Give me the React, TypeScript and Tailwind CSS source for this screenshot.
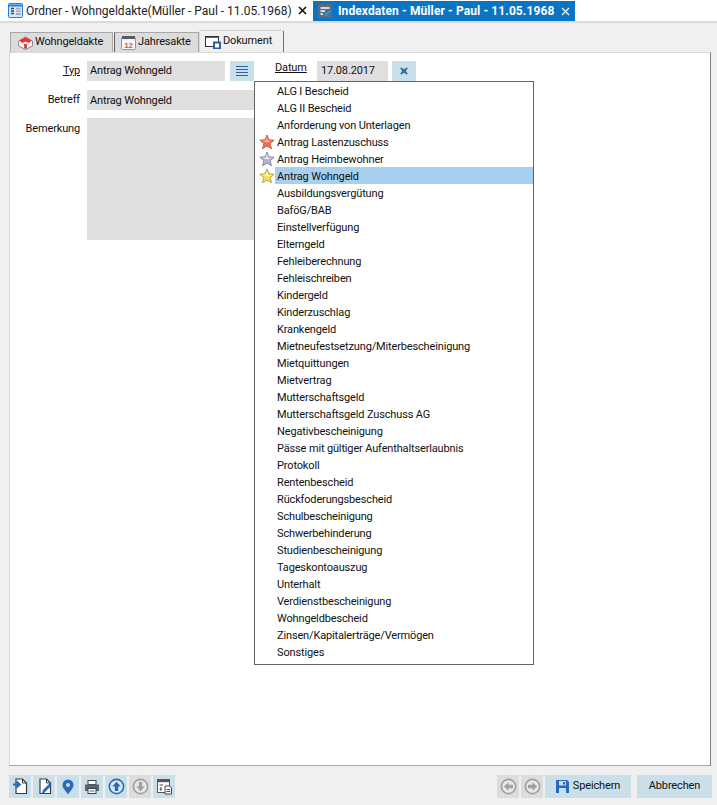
const items = [
  "ALG I Bescheid",
  "ALG II Bescheid",
  "Anforderung von Unterlagen",
  "Antrag Lastenzuschuss",
  "Antrag Heimbewohner",
  "Antrag Wohngeld",
  "Ausbildungsvergütung",
  "BaföG/BAB",
  "Einstellverfügung",
  "Elterngeld",
  "Fehleiberechnung",
  "Fehleischreiben",
  "Kindergeld",
  "Kinderzuschlag",
  "Krankengeld",
  "Mietneufestsetzung/Miterbescheinigung",
  "Mietquittungen",
  "Mietvertrag",
  "Mutterschaftsgeld",
  "Mutterschaftsgeld Zuschuss AG",
  "Negativbescheinigung",
  "Pässe mit gültiger Aufenthaltserlaubnis",
  "Protokoll",
  "Rentenbescheid",
  "Rückfoderungsbescheid",
  "Schulbescheinigung",
  "Schwerbehinderung",
  "Studienbescheinigung",
  "Tageskontoauszug",
  "Unterhalt",
  "Verdienstbescheinigung",
  "Wohngeldbescheid",
  "Zinsen/Kapitalerträge/Vermögen",
  "Sonstiges",
];

const starColors: Record<string, [string, string, string]> = {
  "Antrag Lastenzuschuss": ["#f5674a", "#fbb09a", "#b8705e"],
  "Antrag Heimbewohner": ["#b4b4d2", "#e2e2f0", "#8f8fa6"],
  "Antrag Wohngeld": ["#f8e04e", "#fdf5b0", "#b3a550"],
};

function Star({ fill, light, stroke }: { fill: string; light: string; stroke: string }) {
  return (
    <svg width="16" height="16" viewBox="0 0 16 16">
      <path
        d="M8 1 L10 5.8 L15.2 6.2 L11.2 9.6 L12.5 14.8 L8 12 L3.5 14.8 L4.8 9.6 L0.8 6.2 L6 5.8 Z"
        fill={fill}
        stroke={stroke}
      />
      <path d="M8 3 L9.2 6.6 L13 7 L8 8.4 L3 7 L6.8 6.6 Z" fill={light} />
    </svg>
  );
}

function ToolButton({ children, off }: { children: React.ReactNode; off?: boolean }) {
  return (
    <button
      className={`flex h-[23px] w-[22px] items-center justify-center ${off ? "bg-[#dcdcdc]" : "bg-[#c9dfea]"}`}
    >
      {children}
    </button>
  );
}

function Arrow({ color, dir }: { color: string; dir: "up" | "down" | "left" | "right" }) {
  const rot = { up: 0, right: 90, down: 180, left: 270 }[dir];
  return (
    <svg width="17" height="17" viewBox="0 0 16 16">
      <circle cx="8" cy="8" r="6.7" fill="#fff" fillOpacity="0.35" stroke={color} strokeWidth="1.5" />
      <path
        d="M8 3.6 L12 8 H9.6 V12.2 H6.4 V8 H4 Z"
        fill={color}
        transform={`rotate(${rot} 8 8)`}
      />
    </svg>
  );
}

function DocPage({ children }: { children?: React.ReactNode }) {
  return (
    <svg width="17" height="17" viewBox="0 0 17 17">
      <path d="M4 1 H10.5 L14.5 5 V15.5 H4 Z" fill="#fff" stroke="#3a3a3a" strokeWidth="1.2" />
      <path d="M10.5 1 V5 H14.5" fill="none" stroke="#3a3a3a" />
      {children}
    </svg>
  );
}

export default function App() {
  return (
    <div
      className="relative flex h-[805px] w-[717px] flex-col overflow-hidden bg-[#f0f0f0] text-[11px] tracking-[-0.15px] text-[#111]"
      style={{ fontFamily: "Roboto, sans-serif" }}
    >
      {/* document tabs */}
      <div className="flex h-[21px] bg-white">
        <div className="flex w-[310px] items-center pl-[8px] text-[12px] tracking-normal text-[#222]">
          <svg width="15" height="15" viewBox="0 0 15 15" className="shrink-0">
            <rect x="0.5" y="0.5" width="14" height="14" rx="1" fill="#d5e8f8" stroke="#1f7fd8" />
            <path d="M1 2.5 H14" stroke="#1f7fd8" strokeWidth="2" />
            <path d="M3 5.5 H6 M3 8 H6 M3 10.5 H6" stroke="#3a4450" strokeWidth="1.4" />
            <path d="M8 4.8 H12.5 V12 H8 Z" fill="#9aa7b4" />
            <path d="M8 7 H12.5 M8 9.5 H12.5" stroke="#e8eef4" />
          </svg>
          <span className="ml-[3px] whitespace-nowrap">Ordner - Wohngeldakte(Müller - Paul - 11.05.1968)</span>
          <svg width="9" height="9" viewBox="0 0 9 9" className="ml-auto mr-[3px]">
            <path d="M1 1 L8 8 M8 1 L1 8" stroke="#111" strokeWidth="1.6" />
          </svg>
        </div>
        <div className="ml-[3px] mt-px flex h-[20px] w-[262px] items-center bg-[#0a74c4] pl-[5px] text-[12px] font-bold tracking-[0.1px] text-white">
          <svg width="15" height="14" viewBox="0 0 15 14" className="shrink-0">
            <rect x="0" y="0" width="14" height="14" fill="#5b6b7d" />
            <path d="M2.5 4 H11.5 M2.5 7 H7 M2.5 10 H5" stroke="#fff" strokeWidth="1.5" />
            <path d="M6.5 12 L12 6.5" stroke="#2d8fe0" strokeWidth="2.4" />
          </svg>
          <span className="ml-[5px] whitespace-nowrap">Indexdaten - Müller - Paul - 11.05.1968</span>
          <svg width="9" height="9" viewBox="0 0 9 9" className="ml-auto mr-[5px]">
            <path d="M1 1 L8 8 M8 1 L1 8" stroke="#fff" strokeWidth="1.2" />
          </svg>
        </div>
      </div>
      <div className="h-[2px] bg-[#dadada]" />

      {/* inner tabs */}
      <div className="mt-[7px] flex h-[22px] items-end pl-[10px]">
        <div className="flex h-[20px] w-[103px] items-center border-x border-t border-[#a8a8a8] bg-[#dcdcdc] pl-[6px]">
          <svg width="17" height="14" viewBox="0 0 17 14" className="shrink-0">
            <path d="M1.5 5 L8.5 1 L15.5 5 V10 L8.5 13.5 L1.5 10 Z" fill="#f2f2f2" stroke="#8a8a8a" />
            <path d="M2.5 4.5 L8.5 1.2 L14.5 4.5 L12 7 L8.5 5.5 L5 7 Z" fill="#e8342c" />
            <path d="M7 8 H10 V12.5 H7 Z" fill="#c9504a" />
          </svg>
          <span className="ml-[1px]">Wohngeldakte</span>
        </div>
        <div className="ml-px flex h-[20px] w-[85px] items-center border-x border-t border-l-[#606060] border-r-[#a8a8a8] border-t-[#a8a8a8] bg-[#dcdcdc] pl-[6px]">
          <svg width="15" height="15" viewBox="0 0 15 15" className="shrink-0">
            <rect x="0.5" y="2.5" width="14" height="12" rx="1" fill="#f6f6fc" stroke="#8f8fc0" />
            <path d="M1 1 H14 V4 H1 Z" fill="#5a5a66" />
            <text x="7.5" y="12.5" textAnchor="middle" fontSize="8" fontWeight="700" fill="#e2571e" fontFamily="Liberation Sans, sans-serif">
              12
            </text>
          </svg>
          <span className="ml-[2px]">Jahresakte</span>
        </div>
        <div className="flex h-[22px] w-[85px] items-center rounded-t-[2px] border-x border-t border-l-[#d8d8d8] border-r-[#707070] border-t-[#d0d0d0] bg-[#f0f0f0] pl-[5px]">
          <svg width="16" height="14" viewBox="0 0 16 14" className="shrink-0">
            <rect x="0.5" y="1.5" width="13" height="10" fill="#fff" stroke="#333" />
            <path d="M0.5 2 H13.5" stroke="#333" strokeWidth="1.5" />
            <rect x="9" y="7.5" width="6" height="6" fill="#fff" stroke="#2a5fa8" strokeWidth="2" />
          </svg>
          <span className="ml-[2px]">Dokument</span>
        </div>
      </div>

      {/* main panel */}
      <div className="ml-[9px] mr-[6px] h-[714px] border border-b-[#a8a8a8] border-l-[#d8d8d8] border-r-[#808080] border-t-[#d8d8d8] bg-white">
        <div className="mt-[8px] flex h-[20px] items-center">
          <label className="w-[70px] text-right underline">Typ</label>
          <div className="ml-[7px] flex h-[20px] w-[138px] items-center bg-[#dfdfdf] px-[3px]">Antrag Wohngeld</div>
          <button className="ml-[5px] flex h-[20px] w-[24px] items-center justify-center bg-[#c9dfea]">
            <svg width="12" height="10" viewBox="0 0 12 10">
              <path d="M0 0.5 H12 M0 3.5 H12 M0 6.5 H12 M0 9.5 H12" stroke="#2a5fa8" />
            </svg>
          </button>
          <label className="ml-[21px] w-[31px] -translate-y-[3px] underline">Datum</label>
          <div className="ml-[11px] flex h-[20px] w-[71px] items-center bg-[#dfdfdf] px-[4px]">17.08.2017</div>
          <button className="ml-[4px] flex h-[20px] w-[24px] items-center justify-center bg-[#c9dfea]">
            <svg width="10" height="10" viewBox="0 0 11 11">
              <path d="M4.5 0.5 H6.5 V4.5 H10.5 V6.5 H6.5 V10.5 H4.5 V6.5 H0.5 V4.5 H4.5 Z" fill="#3a6ea8" transform="rotate(45 5.5 5.5)" />
              <circle cx="5.5" cy="5.5" r="2.6" fill="#3a6ea8" />
            </svg>
          </button>
        </div>
        <div className="mt-[9px] flex h-[20px] items-center">
          <label className="w-[70px] pt-px text-right">Betreff</label>
          <div className="ml-[7px] flex h-[20px] w-[329px] items-center bg-[#dfdfdf] px-[3px] pt-[2px]">Antrag Wohngeld</div>
        </div>
        <div className="mt-[8px] flex h-[122px]">
          <label className="w-[70px] pt-[3px] text-right">Bemerkung</label>
          <div className="ml-[7px] h-[122px] w-[329px] bg-[#dfdfdf]" />
        </div>
      </div>

      {/* footer */}
      <div className="mt-[9px] flex items-center pl-[9px] pr-[5px]">
        <div className="flex gap-[2px]">
          <ToolButton>
            <DocPage>
              <path d="M1 6.5 H7 M4.5 3.5 L7.8 6.5 L4.5 9.5" fill="none" stroke="#2a6ab8" strokeWidth="2" />
            </DocPage>
          </ToolButton>
          <ToolButton>
            <DocPage>
              <path d="M7.5 13.5 L14.5 6.5" stroke="#2a6ab8" strokeWidth="3" />
              <path d="M5.5 16 L7 12.5 L9 14.5 Z" fill="#2a6ab8" />
            </DocPage>
          </ToolButton>
          <ToolButton>
            <svg width="12" height="16" viewBox="0 0 12 16">
              <path fillRule="evenodd" d="M6 0.5 A5.5 5.5 0 0 1 11.5 6 C11.5 9.5 8 12 6 15.5 C4 12 0.5 9.5 0.5 6 A5.5 5.5 0 0 1 6 0.5 Z M6 4 A2 2 0 1 0 6 8 A2 2 0 1 0 6 4 Z" fill="#2a6ab8" />
            </svg>
          </ToolButton>
          <ToolButton>
            <svg width="16" height="16" viewBox="0 0 16 16">
              <rect x="4" y="1.5" width="8" height="4" fill="#fff" stroke="#444" />
              <rect x="1" y="5.5" width="14" height="6.5" fill="#5a6470" />
              <rect x="4" y="9.5" width="8" height="5" fill="#fff" stroke="#444" />
              <path d="M5.5 12 H10.5" stroke="#2a6ab8" />
            </svg>
          </ToolButton>
          <ToolButton>
            <Arrow color="#2a6ab8" dir="up" />
          </ToolButton>
          <ToolButton off>
            <Arrow color="#a0a0a0" dir="down" />
          </ToolButton>
          <ToolButton>
            <svg width="17" height="17" viewBox="0 0 17 17">
              <rect x="1.5" y="1.5" width="12" height="13" fill="#fff" stroke="#555" />
              <path d="M1.5 3 H13.5" stroke="#555" strokeWidth="2.4" />
              <path d="M3.5 7 H7 M3.5 11 H5.5 M5 9 V13" stroke="#444" />
              <path d="M9 8 H13.5 L15.5 10 V16 H9 Z" fill="#fff" stroke="#444" />
              <path d="M10.5 11.5 H14 M10.5 13.5 H14" stroke="#444" />
            </svg>
          </ToolButton>
        </div>
        <div className="ml-auto flex">
          <ToolButton off>
            <Arrow color="#a0a0a0" dir="left" />
          </ToolButton>
          <div className="ml-[2px]">
            <ToolButton off>
              <Arrow color="#a0a0a0" dir="right" />
            </ToolButton>
          </div>
          <button className="ml-[2px] flex h-[23px] w-[86px] items-center justify-center bg-[#c9dfea]">
            <svg width="13" height="13" viewBox="0 0 13 13">
              <path fillRule="evenodd" d="M0 0 H11 L13 2 V13 H0 Z M3 1 V5.5 H10 V1 Z M3 8 V13 H10 V8 Z" fill="#2a6ab8" />
              <path d="M7 2 H9 V4.5 H7 Z" fill="#2a6ab8" />
            </svg>
            <span className="ml-[4px]">Speichern</span>
          </button>
          <button className="ml-[6px] h-[23px] w-[75px] bg-[#c9dfea]">Abbrechen</button>
        </div>
      </div>

      {/* type dropdown */}
      <div className="absolute left-[254px] top-[81px] w-[280px] border border-[#646464] bg-white">
        {items.map((item) => (
          <div key={item} className="flex h-[17px] items-center">
            <div className="flex w-[20px] shrink-0 justify-center pl-[3px]">
              {starColors[item] && (
                <Star fill={starColors[item][0]} light={starColors[item][1]} stroke={starColors[item][2]} />
              )}
            </div>
            <div
              className={`h-[17px] flex-1 pl-[2px] pt-[2px] leading-[15px] ${item === "Antrag Wohngeld" ? "bg-[#a6d0ee]" : ""}`}
            >
              {item}
            </div>
          </div>
        ))}
        <div className="h-[4px]" />
      </div>
    </div>
  );
}
